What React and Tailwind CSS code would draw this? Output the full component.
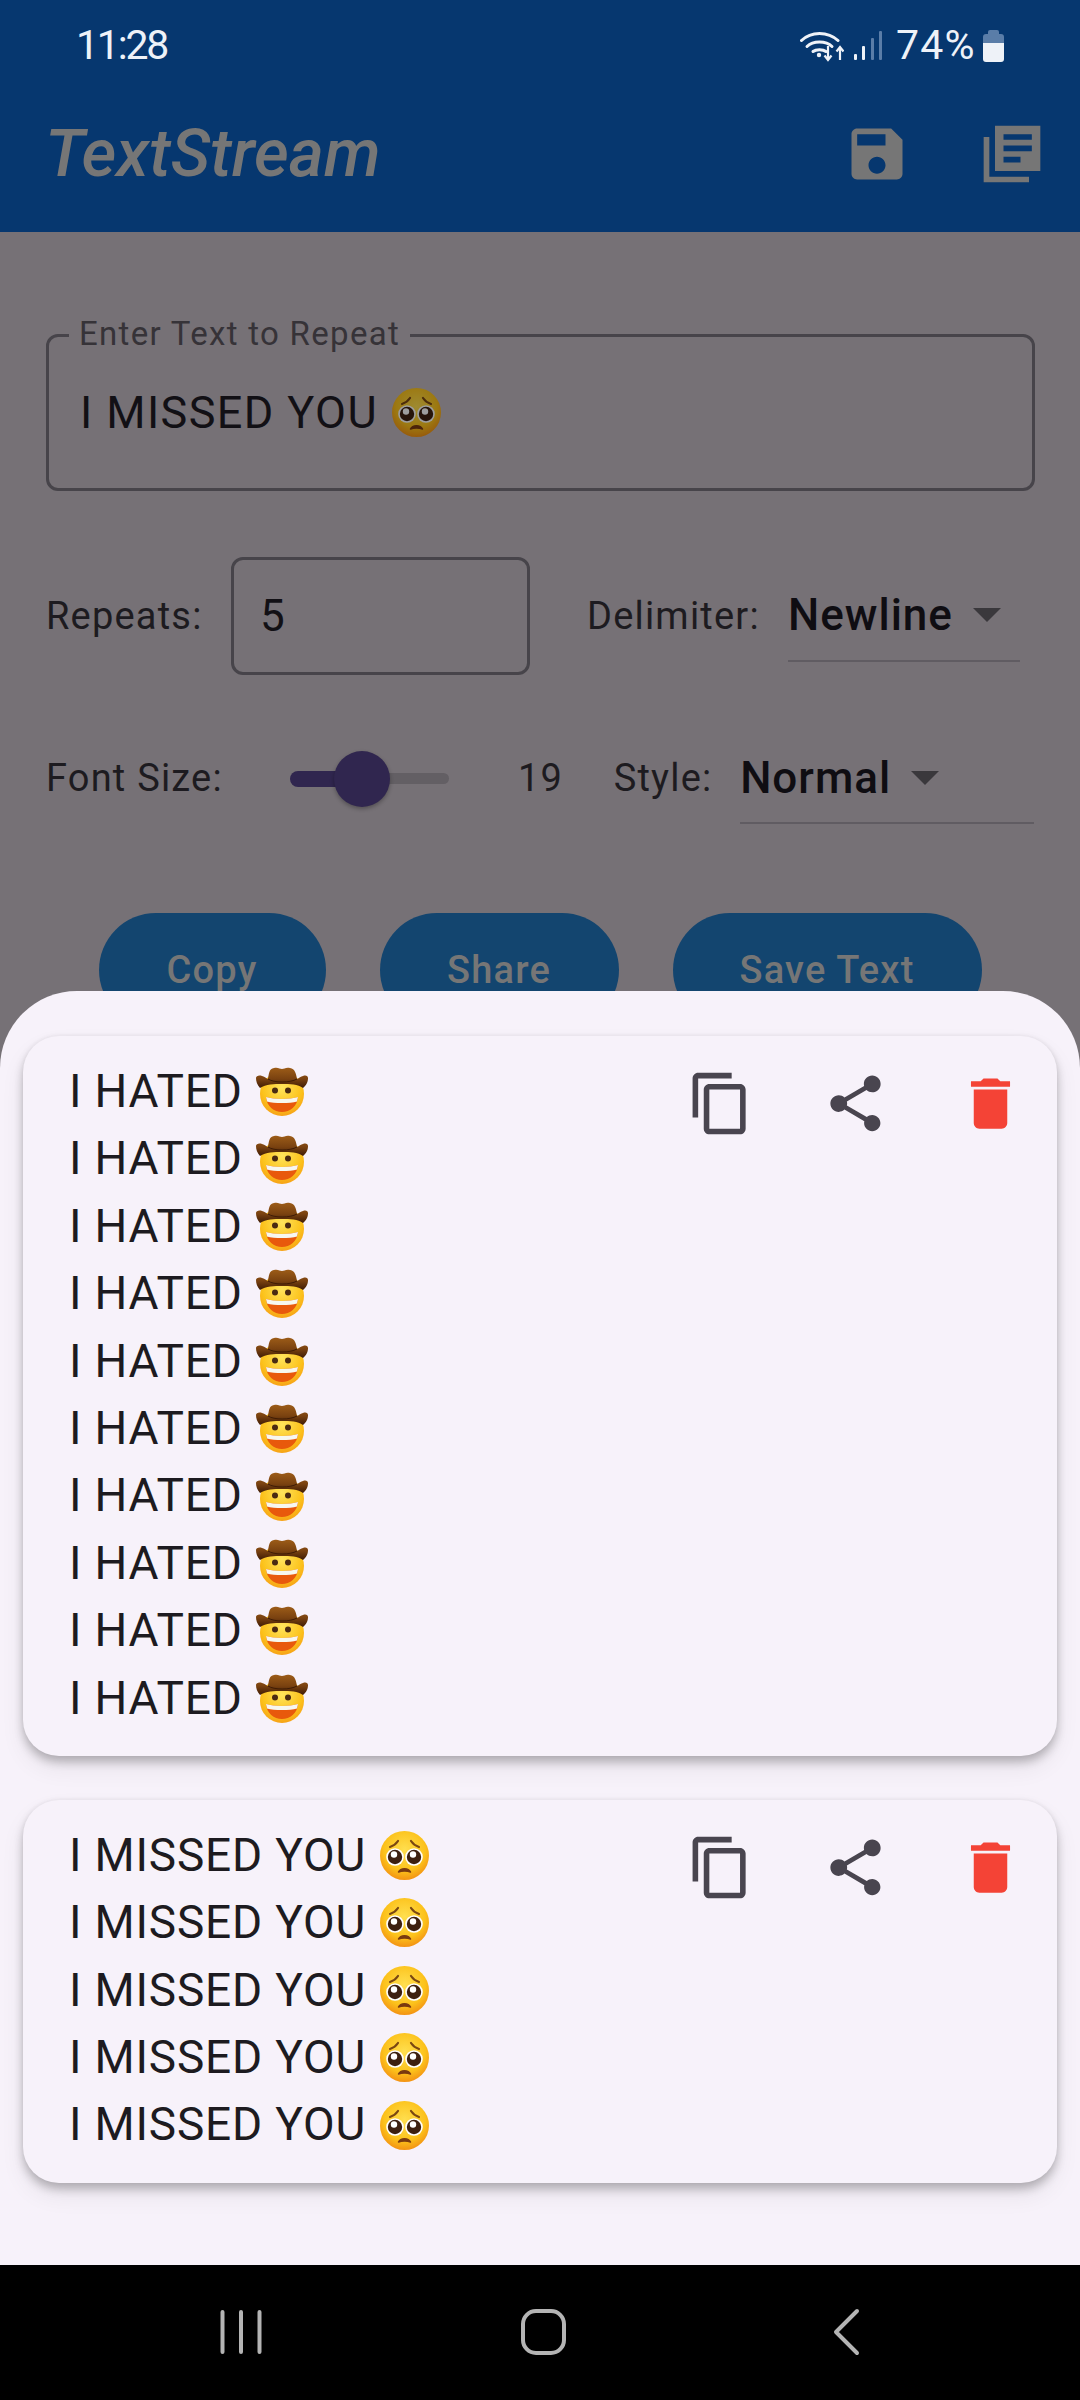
import React from 'react'

function CowboyEmoji() {
  return (
    <svg viewBox="0 0 52 49" className="w-[52px] h-[49px] shrink-0">
      <defs>
        <radialGradient id="cowFace" cx="50%" cy="35%" r="70%">
          <stop offset="0%" stopColor="#ffe45c" />
          <stop offset="65%" stopColor="#fcc21b" />
          <stop offset="100%" stopColor="#f59a16" />
        </radialGradient>
        <linearGradient id="cowHat" x1="0" y1="0" x2="0" y2="1">
          <stop offset="0%" stopColor="#9c5c18" />
          <stop offset="55%" stopColor="#7a4210" />
          <stop offset="100%" stopColor="#3f1c05" />
        </linearGradient>
      </defs>
      <circle cx="26" cy="27" r="22" fill="url(#cowFace)" />
      <path d="M4 21C1 18 0 14 0 11C0 9 3 8 6 9C8 9.500 10 11 12 12C13 6 13 2 18 1C22 0 24 2 26 2C28 2 30 0 34 1C39 2 40 6 41 12C43 11 45 9.500 47 9C50 8 52 9 52 11C52 14 51 18 47 21C42 17 34 17 26 17C18 17 10 17 4 21Z" fill="url(#cowHat)" />
      <path d="M12 12C18 16 34 16 41 12" fill="none" stroke="#3f1c05" strokeWidth="1" />
      <circle cx="19" cy="23.500" r="3" fill="#4a2a12" />
      <circle cx="32" cy="23.500" r="3" fill="#4a2a12" />
      <path d="M10 30C18 32.500 34 32.500 42 30C41.500 39 34 45 26 45C18 45 10.500 39 10 30Z" fill="#e8590c" />
      <path d="M10 30C18 32.500 34 32.500 42 30L41 34.500C34 36.500 18 36.500 11 34.500Z" fill="#f7f7ef" />
    </svg>
  )
}

function PleadingEmoji({ id = 'plead' }) {
  return (
    <svg viewBox="0 0 49 49" className="w-[49px] h-[49px] shrink-0">
      <defs>
        <radialGradient id={id} cx="50%" cy="38%" r="65%">
          <stop offset="0%" stopColor="#ffdf4f" />
          <stop offset="65%" stopColor="#fcc21b" />
          <stop offset="100%" stopColor="#f28c12" />
        </radialGradient>
      </defs>
      <circle cx="24.500" cy="24.500" r="24.500" fill={`url(#${id})`} />
      <path d="M10 16C13 15 16 13 18 10M39 16C36 15 33 13 31 10" fill="none" stroke="#7a4712" strokeWidth="2.200" strokeLinecap="round" />
      <circle cx="15" cy="26" r="8.800" fill="#fff" />
      <circle cx="34" cy="26" r="8.800" fill="#fff" />
      <circle cx="15" cy="26" r="7.200" fill="#3d2010" />
      <circle cx="34" cy="26" r="7.200" fill="#3d2010" />
      <circle cx="14" cy="23.500" r="3.200" fill="#fff" />
      <circle cx="33" cy="23.500" r="3.200" fill="#fff" />
      <path d="M18.500 41C20.500 36.500 28.500 36.500 30.500 41C27.500 39.800 21.500 39.800 18.500 41Z" fill="#7a3a10" stroke="#7a3a10" strokeWidth="1.500" strokeLinejoin="round" />
    </svg>
  )
}

function StatusBar() {
  return (
    <div className="h-[92px] flex items-center pl-[76px] pr-[76px] text-[#eef2f8] text-[41px]">
      <span className="tracking-[-2.2px]">11:28</span>
      <div className="ml-auto flex items-center">
        <svg viewBox="0 0 44 34" className="w-[44px] h-[34px]">
          <g fill="none" stroke="#eef2f8" strokeWidth="3" strokeLinecap="round">
            <path d="M1.500 11.500C11 2 28 2 38 11.500" />
            <path d="M7 17.500C13 11.500 26 11.500 32 17.500" />
            <path d="M13 22.500C16 20 23 20 26 22.500" />
          </g>
          <circle cx="19" cy="26" r="2.200" fill="#eef2f8" />
          <path d="M28 17V30M24.500 26.500L28 31L31.500 26.500" fill="none" stroke="#eef2f8" strokeWidth="2.200" />
          <path d="M40 31V19M36.500 22.500L40 18L43.500 22.500" fill="none" stroke="#eef2f8" strokeWidth="2.200" />
        </svg>
        <svg viewBox="0 0 28 30" className="ml-[10px] w-[28px] h-[30px]">
          <rect x="0" y="23" width="3" height="6" rx="1" fill="#eef2f8" />
          <rect x="8" y="15" width="3" height="14" rx="1" fill="#eef2f8" />
          <rect x="17" y="7" width="3" height="22" rx="1" fill="#5a7da8" />
          <rect x="25" y="0" width="3" height="29" rx="1" fill="#5a7da8" />
        </svg>
        <span className="ml-[14px] w-[79px] tracking-[1.2px]">74%</span>
        <div className="ml-[8px] w-[21px] flex flex-col items-center">
          <div className="w-[11px] h-[4px] rounded-t-[2px] bg-[#5a7da8]" />
          <div className="w-[21px] h-[9px] rounded-t-[3px] bg-[#5a7da8]" />
          <div className="w-[21px] h-[19px] rounded-b-[3px] bg-[#eef2f8]" />
        </div>
      </div>
    </div>
  )
}

function AppBar() {
  return (
    <div className="relative h-[140px] flex items-start pl-[45px]">
      <span className="mt-[23px] text-[67px] leading-[76px] font-medium italic text-[#767676]">TextStream</span>
      <div className="ml-auto flex pt-[28px] pr-[34px] gap-[67px]">
        <svg viewBox="0 0 24 24" className="w-[68px] h-[68px]" fill="#767676">
          <path d="M17 3H5c-1.110 0-2 .9-2 2v14c0 1.100.89 2 2 2h14c1.100 0 2-.9 2-2V7l-4-4zm-5 16c-1.660 0-3-1.340-3-3s1.340-3 3-3 3 1.340 3 3-1.340 3-3 3zm3-10H5V5h10v4z" />
        </svg>
        <svg viewBox="0 0 24 24" className="w-[68px] h-[68px]" fill="#767676">
          <path d="M4 6H2v16h16v-2H4V6zm18-4H6v16h16V2zm-3 9H9V9h10v2zm-4 4H9v-2h6v2zm4-8H9V5h10v2z" />
        </svg>
      </div>
    </div>
  )
}

function Dropdown({ value, width }) {
  return (
    <div className={`${width} h-[91px] border-b-[2px] border-[#605c62] flex items-center`}>
      <span className="text-[44px] tracking-[1px] font-medium text-[#0f0d12]">{value}</span>
      <div className="ml-[20px] w-0 h-0 border-l-[14px] border-r-[14px] border-t-[14px] border-l-transparent border-r-transparent border-t-[#3a383c]" />
    </div>
  )
}

function Form() {
  return (
    <div className="px-[46px] pt-[102px]">
      <div className="relative w-[989px] h-[157px] border-[3px] border-[#47444a] rounded-[12px] pl-[31px] flex items-center gap-[14px]">
        <span className="absolute left-[20px] top-[-22px] px-[10px] bg-[#767176] text-[33px] leading-[38px] tracking-[1.3px] text-[#363338]">Enter Text to Repeat</span>
        <span className="text-[45px] tracking-[1.4px] text-[#121015]">I MISSED YOU</span>
        <div className="brightness-[.62]">
          <PleadingEmoji id="pleadField" />
        </div>
      </div>

      <div className="mt-[66px] h-[118px] flex items-center text-[38px] tracking-[1.2px] text-[#1d1b20]">
        <span className="w-[185px]">Repeats:</span>
        <div className="w-[299px] h-[118px] border-[3px] border-[#47444a] rounded-[12px] pl-[26px] flex items-center text-[44px] text-[#121015]">5</div>
        <span className="ml-[57px] w-[201px]">Delimiter:</span>
        <Dropdown value="Newline" width="w-[232px]" />
      </div>

      <div className="mt-[58px] h-[91px] flex items-center text-[38px] tracking-[1.2px] text-[#1d1b20]">
        <span className="w-[245px]">Font Size:</span>
        <div className="relative w-[159px] h-[56px] flex items-center">
          <div className="w-[72px] h-[16px] rounded-l-full bg-[#30264f]" />
          <div className="w-[87px] h-[11px] rounded-r-full bg-[#635f64]" />
          <div className="absolute left-[44px] top-0 w-[56px] h-[56px] rounded-full bg-[#30264f] shadow-[0_2px_4px_rgba(0,0,0,0.3)]" />
        </div>
        <span className="ml-[69px] w-[96px] tracking-[1px]">19</span>
        <span className="w-[127px]">Style:</span>
        <Dropdown value="Normal" width="w-[295px]" />
      </div>

      <div className="mt-[89px] flex justify-center gap-[54px] text-[38px] tracking-[1.2px] font-medium text-[#767676]">
        <div className="w-[227px] h-[114px] rounded-full bg-[#13456f] flex items-center justify-center">Copy</div>
        <div className="w-[239px] h-[114px] rounded-full bg-[#13456f] flex items-center justify-center">Share</div>
        <div className="w-[309px] h-[114px] rounded-full bg-[#13456f] flex items-center justify-center">Save Text</div>
      </div>
    </div>
  )
}

function CardActions() {
  return (
    <div className="flex gap-[68px] pt-[12px]">
      <svg viewBox="0 0 24 24" className="w-[67px] h-[67px]" fill="#49454f">
        <path d="M16 1H4c-1.100 0-2 .9-2 2v14h2V3h12V1zm3 4H8c-1.100 0-2 .9-2 2v14c0 1.100.9 2 2 2h11c1.100 0 2-.9 2-2V7c0-1.100-.9-2-2-2zm0 16H8V7h11v14z" />
      </svg>
      <svg viewBox="0 0 24 24" className="w-[67px] h-[67px]" fill="#49454f">
        <path d="M18 16.080c-.76 0-1.440.3-1.960.77L8.910 12.700c.05-.23.09-.46.09-.7s-.04-.47-.09-.7l7.050-4.110c.54.5 1.250.81 2.040.81 1.660 0 3-1.340 3-3s-1.340-3-3-3-3 1.340-3 3c0 .24.04.47.09.7L8.040 9.810C7.500 9.310 6.790 9 6 9c-1.660 0-3 1.340-3 3s1.340 3 3 3c.79 0 1.500-.31 2.040-.81l7.120 4.160c-.05.21-.08.43-.08.65 0 1.610 1.310 2.920 2.920 2.920 1.610 0 2.920-1.310 2.920-2.920s-1.310-2.920-2.920-2.920z" />
      </svg>
      <svg viewBox="0 0 24 24" className="w-[67px] h-[67px]" fill="#f44336">
        <path d="M6 19c0 1.100.9 2 2 2h8c1.100 0 2-.9 2-2V7H6v12zM19 4h-3.500l-1-1h-5l-1 1H5v2h14V4z" />
      </svg>
    </div>
  )
}

function Card({ text, count, emoji }) {
  return (
    <div className="rounded-[36px] bg-[#f7f2fa] shadow-[0_6px_10px_rgba(0,0,0,0.24),0_12px_24px_rgba(0,0,0,0.07),0_-1px_4px_rgba(0,0,0,0.04)] pt-[22px] pb-[24px] pl-[46px] pr-[33px] flex justify-between items-start">
      <div className="text-[46px] leading-[67.4px] tracking-[0.8px] text-[#1d1b20]">
        {Array.from({ length: count }).map((_, i) => (
          <div key={i} className={`h-[67.4px] flex items-center ${emoji === 'cowboy' ? 'gap-[13px]' : 'gap-[14px]'}`}>
            <span>{text}</span>
            {emoji === 'cowboy' ? <CowboyEmoji /> : <PleadingEmoji id={`plead${i}`} />}
          </div>
        ))}
      </div>
      <CardActions />
    </div>
  )
}

function Sheet() {
  return (
    <div className="absolute left-0 right-0 top-[991px] bottom-[135px] rounded-t-[77px] bg-[#f7f2fa] px-[23px] pt-[45px] flex flex-col gap-[44px]">
      <Card text="I HATED" count={10} emoji="cowboy" />
      <Card text="I MISSED YOU" count={5} emoji="pleading" />
    </div>
  )
}

function NavBar() {
  return (
    <div className="absolute left-0 right-0 bottom-0 h-[135px] bg-black">
      <svg viewBox="0 0 1080 135" className="w-full h-full" fill="none" stroke="#b4b4b4" strokeWidth="4" strokeLinecap="round" strokeLinejoin="round">
        <path d="M222.500 47V87M241 47V87M259.500 47V87" />
        <rect x="523" y="46" width="41" height="42" rx="13" />
        <path d="M857 46L836 67L857 88" />
      </svg>
    </div>
  )
}

export default function App() {
  return (
    <div className="relative w-[1080px] h-[2400px] overflow-hidden bg-[#767176] font-['Roboto',sans-serif]">
      <div className="h-[232px] bg-[#06376f]">
        <StatusBar />
        <AppBar />
      </div>
      <Form />
      <Sheet />
      <NavBar />
    </div>
  )
}
